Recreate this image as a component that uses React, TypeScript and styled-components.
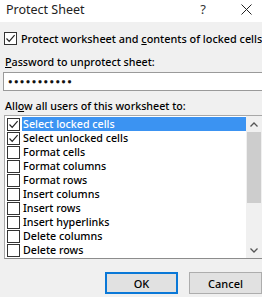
import React from 'react';
import styled, { createGlobalStyle } from 'styled-components';

const GlobalStyle = createGlobalStyle`
	*, *::before, *::after {
		box-sizing: border-box;
	}
	html, body {
		margin: 0;
		padding: 0;
		width: 262px;
		height: 297px;
		overflow: hidden;
		background: #f0f0f0;
	}
	body {
		font-family: 'Noto Sans', 'Open Sans', sans-serif;
		font-weight: 500;
		color: #000;
	}
`;

const permissions = [
	{ label: 'Select locked cells', checked: true, selected: true },
	{ label: 'Select unlocked cells', checked: true },
	{ label: 'Format cells' },
	{ label: 'Format columns' },
	{ label: 'Format rows' },
	{ label: 'Insert columns' },
	{ label: 'Insert rows' },
	{ label: 'Insert hyperlinks' },
	{ label: 'Delete columns' },
	{ label: 'Delete rows' },
];

const CheckMark = () => (
	<svg width="11" height="11" viewBox="0 0 11 11">
		<path d="M1.5 5.5 L4.2 8.3 L9.6 2.2" fill="none" stroke="#222" strokeWidth="1.2" />
	</svg>
);

const App: React.FC = () => {
	return (
		<Dialog>
			<GlobalStyle />
			<TitleBar>
				<Title>Protect Sheet</Title>
				<TitleButtons>
					<HelpGlyph>?</HelpGlyph>
					<svg width="11" height="11" viewBox="0 0 11 11">
						<path d="M0.5 0.5 L10.5 10.5 M10.5 0.5 L0.5 10.5" stroke="#222" strokeWidth="1" />
					</svg>
				</TitleButtons>
			</TitleBar>
			<Body>
				<TopCheckRow>
					<Box>
						<CheckMark />
					</Box>
					<Label>
						Protect worksheet and <u>c</u>ontents of locked cells
					</Label>
				</TopCheckRow>
				<FieldLabel>
					<u>P</u>assword to unprotect sheet:
				</FieldLabel>
				<PasswordInput>{'\u25CF'.repeat(11)}</PasswordInput>
				<FieldLabel $gap={8}>
					All<u>o</u>w all users of this worksheet to:
				</FieldLabel>
				<ListBox>
					<Rows>
						{permissions.map((p) => (
							<Row key={p.label}>
								<Box $inList>{p.checked ? <CheckMark /> : null}</Box>
								<RowText $selected={!!p.selected}>{p.label}</RowText>
							</Row>
						))}
					</Rows>
					<ScrollBar>
						<ScrollArrow>
							<svg width="8" height="5" viewBox="0 0 8 5">
								<path d="M0.5 4.5 L4 1 L7.5 4.5" fill="none" stroke="#555" strokeWidth="1.3" />
							</svg>
						</ScrollArrow>
						<Track>
							<Thumb />
						</Track>
						<ScrollArrow>
							<svg width="8" height="5" viewBox="0 0 8 5">
								<path d="M0.5 0.5 L4 4 L7.5 0.5" fill="none" stroke="#555" strokeWidth="1.3" />
							</svg>
						</ScrollArrow>
					</ScrollBar>
				</ListBox>
				<ButtonRow>
					<Button $primary>OK</Button>
					<Button>Cancel</Button>
				</ButtonRow>
			</Body>
		</Dialog>
	);
};

const Dialog = styled.div`
	width: 262px;
	height: 297px;
	overflow: hidden;
	background: #f0f0f0;
`;

const TitleBar = styled.div`
	height: 22px;
	background: #ffffff;
	display: flex;
	align-items: center;
	justify-content: space-between;
	padding: 0 10px 4px 6px;
`;

const Title = styled.div`
	font-size: 12.5px;
	font-weight: 400;
	color: #222;
`;

const TitleButtons = styled.div`
	display: flex;
	align-items: center;
	gap: 35px;
`;

const HelpGlyph = styled.span`
	font-size: 13px;
	font-weight: 400;
	color: #333;
`;

const Body = styled.div`
	padding: 10px 0 0 4px;
	font-size: 10.7px;
`;

const TopCheckRow = styled.div`
	display: flex;
	align-items: center;
	gap: 4px;
	height: 13px;
`;

const Box = styled.div<{ $inList?: boolean }>`
	width: 13px;
	height: 13px;
	border: 1px solid #333;
	background: #fff;
	display: flex;
	align-items: center;
	justify-content: center;
	flex-shrink: 0;
	margin-left: ${(p) => (p.$inList ? '2px' : '0')};
`;

const Label = styled.span`
	white-space: nowrap;
	font-size: 10.85px;
`;

const FieldLabel = styled.div<{ $gap?: number }>`
	margin: ${(p) => p.$gap ?? 10}px 0 0 1px;
	height: 14px;
	line-height: 14px;
	white-space: nowrap;
`;

const PasswordInput = styled.div`
	margin-top: 3px;
	margin-left: -1px;
	height: 19px;
	border: 1px solid #9a9a9a;
	border-right: none;
	background: #fff;
	font-size: 7.5px;
	letter-spacing: 1.4px;
	line-height: 17px;
	padding-left: 4px;
	color: #111;
`;

const ListBox = styled.div`
	margin-top: 2px;
	width: 259px;
	height: 144px;
	border: 1px solid #a8a8a8;
	border-bottom-color: #8c8c8c;
	background: #fff;
	display: flex;
`;

const Rows = styled.div`
	flex: 1;
	display: flex;
	flex-direction: column;
	padding-top: 1px;
`;

const Row = styled.div`
	height: 14px;
	display: flex;
	align-items: center;
`;

const RowText = styled.div<{ $selected: boolean }>`
	flex: 1;
	height: 14px;
	line-height: 14px;
	margin-left: 2px;
	padding-left: 1px;
	white-space: nowrap;
	background: ${(p) => (p.$selected ? '#3b93f2' : 'transparent')};
	color: ${(p) => (p.$selected ? '#fff' : '#000')};
`;

const ScrollBar = styled.div`
	width: 16px;
	background: #f0f0f0;
	display: flex;
	flex-direction: column;
`;

const ScrollArrow = styled.div`
	height: 16px;
	display: flex;
	align-items: center;
	justify-content: center;
`;

const Track = styled.div`
	flex: 1;
	padding: 0 1px;
`;

const Thumb = styled.div`
	height: 71px;
	background: #cdcdcd;
`;

const ButtonRow = styled.div`
	display: flex;
	gap: 11px;
	margin-top: 13px;
	padding-left: 101px;
`;

const Button = styled.div<{ $primary?: boolean }>`
	width: 73px;
	height: 22px;
	flex-shrink: 0;
	border: ${(p) => (p.$primary ? '2px solid #0a78d7' : '1px solid #adadad')};
	background: #e1e1e1;
	display: flex;
	align-items: center;
	justify-content: center;
	font-size: 11px;
	color: #000;
`;

export default App;
